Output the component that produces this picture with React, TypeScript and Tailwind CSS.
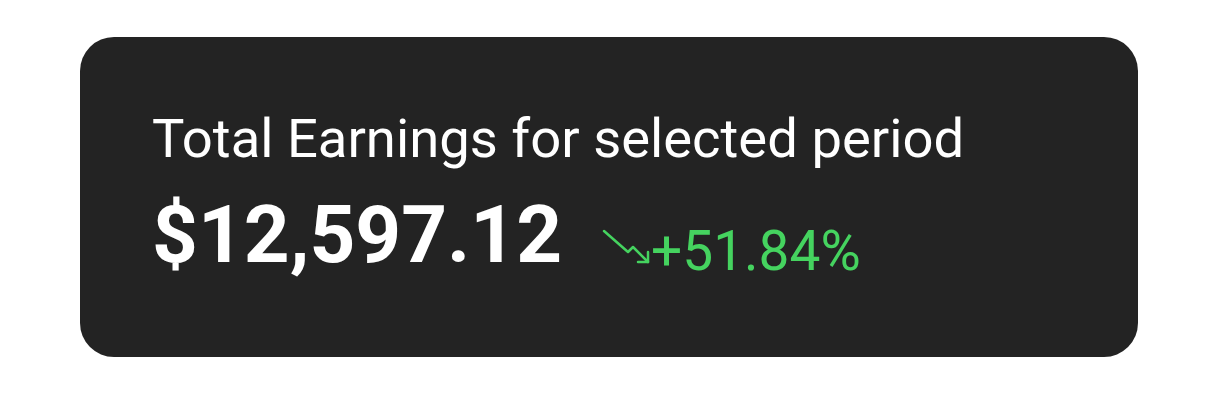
export default function App() {
  return (
    <div className="w-[1224px] h-[400px] bg-white pt-[37px] pl-[80px]" style={{ fontFamily: 'Roboto, sans-serif' }}>
      <div className="w-[1058px] h-[320px] rounded-[34px] bg-[#232323] pl-[72px] pt-[75px]">
        <div className="text-[54.4px] leading-none text-white">Total Earnings for selected period</div>
        <div className="mt-[29px] flex items-start">
          <span className="text-[80px] leading-none font-bold text-white">$12,597.12</span>
          <span className="ml-[39px] mt-[29px] flex items-start text-[55px] leading-none text-[#45d35f]">
            <svg width="50" height="36" viewBox="0 0 50 36" fill="none" stroke="currentColor" strokeWidth="2.5" strokeLinecap="round" strokeLinejoin="round" className="mt-[5px]">
              <path d="M3 2 L27 23 L32 18 L47 33" />
              <path d="M37 33 H47 V23" />
            </svg>
            +51.84%
          </span>
        </div>
      </div>
    </div>
  );
}
